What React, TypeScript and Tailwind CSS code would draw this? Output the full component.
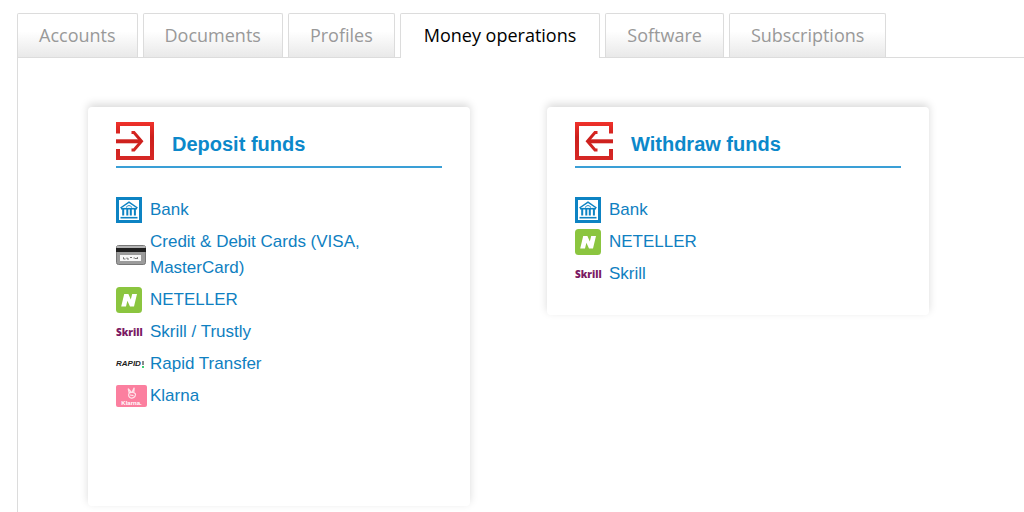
import type { ReactNode } from 'react';

const tabs = [
  'Accounts',
  'Documents',
  'Profiles',
  'Money operations',
  'Software',
  'Subscriptions'
];

const activeTab = 'Money operations';

function DepositIcon() {
  return (
    <svg width="38" height="38" viewBox="0 0 38 38" fill="none" stroke="url(#deposit-red)" strokeWidth="4" aria-hidden="true">
      <defs>
        <linearGradient id="deposit-red" gradientUnits="userSpaceOnUse" x1="0" y1="0" x2="0" y2="38">
          <stop offset="0" stopColor="#f0322b" />
          <stop offset="0.4" stopColor="#cc1f1c" />
          <stop offset="1" stopColor="#d62825" />
        </linearGradient>
      </defs>
      <path d="M2 11.5V2H36V36H2V27" />
      <path d="M0 19.3H25" />
      <path d="M15.5 10.5H18L25.5 19.3L18 28H15.5" strokeWidth="3" />
    </svg>
  );
}

function WithdrawIcon() {
  return (
    <svg width="38" height="38" viewBox="0 0 38 38" fill="none" stroke="url(#withdraw-red)" strokeWidth="4" aria-hidden="true">
      <defs>
        <linearGradient id="withdraw-red" gradientUnits="userSpaceOnUse" x1="0" y1="0" x2="0" y2="38">
          <stop offset="0" stopColor="#f0322b" />
          <stop offset="0.4" stopColor="#cc1f1c" />
          <stop offset="1" stopColor="#d62825" />
        </linearGradient>
      </defs>
      <path d="M36 11.5V2H2V36H36V27" />
      <path d="M38 19.3H13" />
      <path d="M22.5 10.5H20L12.5 19.3L20 28H22.5" strokeWidth="3" />
    </svg>
  );
}

function BankIcon() {
  return (
    <svg width="26" height="26" viewBox="0 0 26 26" fill="none" stroke="#0d83c3" aria-hidden="true">
      <rect x="1.5" y="1.5" width="23" height="23" strokeWidth="3" />
      <path d="M4.5 11L13 5.2L21.5 11" strokeWidth="1.5" />
      <path d="M5 11.7H21" strokeWidth="1.6" />
      <path d="M10.5 10.5C10.5 8 15.5 8 15.5 10.5" strokeWidth="1" />
      <path d="M7.2 12V18.5M11.3 12V18.5M14.8 12V18.5M18.9 12V18.5" strokeWidth="2" />
      <path d="M4.5 20.7H21.5" strokeWidth="1.6" />
    </svg>
  );
}

function CardIcon() {
  return (
    <svg width="30" height="20" viewBox="0 0 30 20" aria-hidden="true">
      <rect x="0.5" y="0.5" width="29" height="19" rx="2" fill="#9b9b9b" stroke="#777777" />
      <rect x="1" y="1" width="28" height="2" fill="#b5b5b5" />
      <rect x="0" y="3" width="30" height="4" fill="#1f1f1f" />
      <rect x="4" y="10" width="21" height="6" fill="#f7f7f7" />
      <path d="M7.5 12.2V14H9.5M11 12.5V14H13M14 12.5H16M17.5 13H19L20 14L21.5 12.3V14" fill="none" stroke="#666666" strokeWidth="0.9" />
    </svg>
  );
}

function NetellerIcon() {
  return (
    <svg width="26" height="26" viewBox="0 0 26 26" aria-hidden="true">
      <rect width="26" height="26" rx="3.5" fill="#8bc53f" />
      <path d="M5.2 19.5L8.2 7H12.4L14.8 12.6L16.2 7H21L18 19.5H14L11.4 13.8L10 19.5Z" fill="#ffffff" />
    </svg>
  );
}

function SkrillLogo() {
  return (
    <span aria-hidden="true" className="font-['Open_Sans',sans-serif] text-[10px] leading-[12px] font-extrabold text-[#7b1a63]">
      Skrill
    </span>
  );
}

function RapidLogo() {
  return (
    <span aria-hidden="true" className="flex items-center gap-px font-['Liberation_Sans',sans-serif] text-[8px] leading-[12px] font-bold text-[#1d1d1d] italic">
      RAPID
      <svg width="2" height="7" viewBox="0 0 2 7">
        <path d="M0 0H2V4H0Z" fill="#8a8a8a" />
        <path d="M0 5H2V7H0Z" fill="#3ccf74" />
      </svg>
    </span>
  );
}

function KlarnaLogo() {
  return (
    <span aria-hidden="true" className="flex h-[22px] w-[31px] flex-col items-center justify-end rounded-xs bg-[#fb7f9f]">
      <svg width="10" height="12" viewBox="0 0 10 12" fill="none" stroke="#ffe3ea" strokeWidth="1.2">
        <path d="M2.2 6L1.2 1.6L4.4 5.5M5.2 5L7.2 0.8L6.8 5.5M2 6.5C3 4.8 8.8 5.2 8.5 7.5C8.3 10.5 5.5 11.5 3.8 11C1.8 10.4 1.2 8.4 2 6.5ZM3 8L6.5 8.6" />
      </svg>
      <span className="font-['Liberation_Sans',sans-serif] text-[6px] leading-[8px] font-bold text-white">Klarna.</span>
    </span>
  );
}

type Method = { name: string; icon: ReactNode };

const depositMethods: Method[] = [
  { name: 'Bank', icon: <BankIcon /> },
  { name: 'Credit & Debit Cards (VISA, MasterCard)', icon: <CardIcon /> },
  { name: 'NETELLER', icon: <NetellerIcon /> },
  { name: 'Skrill / Trustly', icon: <SkrillLogo /> },
  { name: 'Rapid Transfer', icon: <RapidLogo /> },
  { name: 'Klarna', icon: <KlarnaLogo /> }
];

const withdrawMethods: Method[] = [
  { name: 'Bank', icon: <BankIcon /> },
  { name: 'NETELLER', icon: <NetellerIcon /> },
  { name: 'Skrill', icon: <SkrillLogo /> }
];

function FundsCard({ title, icon, methods, className = '' }: { title: string; icon: ReactNode; methods: Method[]; className?: string }) {
  return (
    <section className={`rounded-sm bg-white px-7 pt-[15px] pb-7 shadow-[0_-3px_8px_rgba(0,0,0,0.15)] ${className}`}>
      <div className="flex items-center gap-[18px] border-b-2 border-[#3a9fd6] pb-1.5">
        {icon}
        <h2 className="pt-1.5 text-[20px] leading-6 font-bold text-[#0c88ca]">{title}</h2>
      </div>
      <ul className="mt-[29px] flex flex-col gap-1.5">
        {methods.map(method => (
          <li key={method.name}>
            <a href="#" className="flex max-w-[264px] items-center text-[17px] leading-[26px] text-[#0f80c1]">
              <span className="flex w-[34px] shrink-0">{method.icon}</span>
              <span>{method.name}</span>
            </a>
          </li>
        ))}
      </ul>
    </section>
  );
}

export default function App() {
  return (
    <div className="flex min-h-screen flex-col bg-white pt-[13px] pl-[17px] font-['Liberation_Sans',Arial,sans-serif]">
      <nav className="flex gap-[5px] font-['Open_Sans',sans-serif] text-[18px] leading-[42px]">
        {tabs.map(tab =>
          tab === activeTab ? (
            <a key={tab} href="#" aria-current="page" className="z-10 -mb-px rounded-t-xs border border-b-0 border-[#dcdcdc] bg-white px-[23px] pb-0.5 text-black">
              {tab}
            </a>
          ) : (
            <a key={tab} href="#" className="rounded-t-xs border border-b-0 border-[#dcdcdc] bg-linear-to-b from-white from-40% to-[#e9e9e9] px-[21px] text-[#999999]">
              {tab}
            </a>
          )
        )}
      </nav>
      <main className="grow border-t border-l border-[#dcdcdc] pt-[49px] pr-[95px] pb-1.5 pl-[70px]">
        <div className="grid grid-cols-2 items-start gap-[77px]">
          <FundsCard title="Deposit funds" icon={<DepositIcon />} methods={depositMethods} className="min-h-[399px]" />
          <FundsCard title="Withdraw funds" icon={<WithdrawIcon />} methods={withdrawMethods} />
        </div>
      </main>
    </div>
  );
}
